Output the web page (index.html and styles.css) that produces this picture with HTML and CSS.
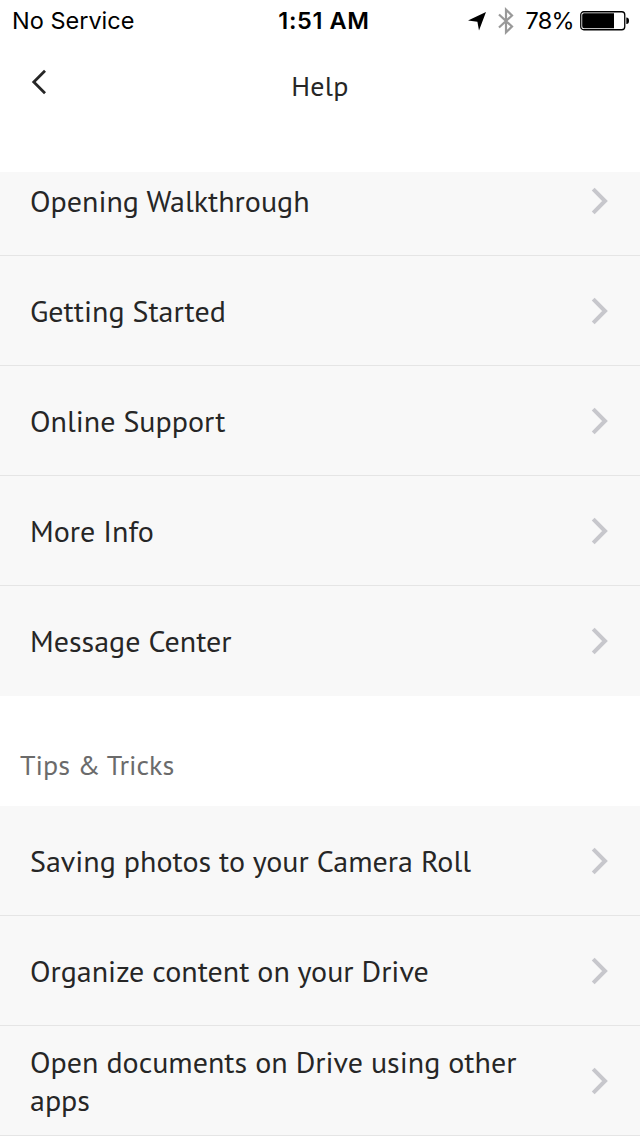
FILE: index.html
```html
<!DOCTYPE html>
<html lang="en">
<head>
<meta charset="utf-8">
<title>Help</title>
<link rel="stylesheet" href="styles.css">
</head>
<body>
<svg class="sprite" aria-hidden="true"><symbol id="chevron" viewBox="0 0 18 28"><path d="M2.2 2.2 14 14 2.2 25.8" fill="none" stroke="#c7c7cc" stroke-width="4"/></symbol></svg>
<div class="screen">
  <header class="header">
    <div class="status">
      <span class="carrier">No Service</span>
      <span class="clock">1:51 AM</span>
      <div class="indicators">
        <svg class="location" width="20" height="20" viewBox="0 0 20 20"><path d="M19 1 12 19.5 10.4 10.8 1 9.4Z" fill="#000"/></svg>
        <svg class="bluetooth" width="16" height="28" viewBox="0 0 16 28"><path d="M1 7.5 14 19.5 8 25.3V2.7L14 8.5 1 20.5" fill="none" stroke="#999" stroke-width="2.2"/></svg>
        <span class="percent">78%</span>
        <svg class="battery" width="49" height="20" viewBox="0 0 49 20"><rect x=".75" y=".75" width="44" height="18" rx="3" fill="#fff" stroke="#000" stroke-width="1.3"/><path d="M4 2.2H34V17.3H4Q2.2 17.3 2.2 15V4Q2.2 2.2 4 2.2Z"/><path d="M46.3 6.5Q49 6.5 49 9.8T46.3 13Z"/></svg>
      </div>
    </div>
    <nav class="nav">
      <svg class="back" width="18" height="28" viewBox="0 0 18 28"><path d="M15 2.8 3.8 14 15 25.2" fill="none" stroke="#262626" stroke-width="2.8"/></svg>
      <h1 class="title">Help</h1>
    </nav>
  </header>
  <main class="content">
    <ul class="list scrolled">
      <li class="row"><span class="label">Opening Walkthrough</span><svg class="chevron"><use href="#chevron"/></svg></li>
      <li class="row"><span class="label">Getting Started</span><svg class="chevron"><use href="#chevron"/></svg></li>
      <li class="row"><span class="label">Online Support</span><svg class="chevron"><use href="#chevron"/></svg></li>
      <li class="row"><span class="label">More Info</span><svg class="chevron"><use href="#chevron"/></svg></li>
      <li class="row plain"><span class="label">Message Center</span><svg class="chevron"><use href="#chevron"/></svg></li>
    </ul>
    <h2 class="section">Tips &amp; Tricks</h2>
    <ul class="list">
      <li class="row"><span class="label">Saving photos to your Camera Roll</span><svg class="chevron"><use href="#chevron"/></svg></li>
      <li class="row"><span class="label">Organize content on your Drive</span><svg class="chevron"><use href="#chevron"/></svg></li>
      <li class="row"><span class="label">Open documents on Drive using other<br>apps</span><svg class="chevron"><use href="#chevron"/></svg></li>
    </ul>
  </main>
</div>
</body>
</html>
```
FILE: styles.css
```css
* { box-sizing: border-box; }
body { margin: 0; background: #fff; font-family: "PT Sans", "Noto Sans", sans-serif; color: #262626; }
.sprite { display: none; }
.screen { width: 640px; height: 1136px; overflow: hidden; display: flex; flex-direction: column; }
.header { height: 172px; flex: none; background: #fff; }
.status { height: 41px; padding: 0 11px 0 12px; display: grid; grid-template-columns: 1fr auto 1fr; grid-template-rows: 41px; align-items: center; color: #000; font-family: Inter, sans-serif; font-size: 23.5px; line-height: 41px; }
.clock { font-weight: 600; letter-spacing: 0.65px; padding-left: 7px; }
.indicators { height: 41px; display: flex; align-items: center; justify-content: flex-end; }
.location { margin-right: 11px; }
.bluetooth { margin-right: 12px; }
.percent { margin-right: 6px; line-height: 41px; letter-spacing: -0.7px; }
.nav { height: 90px; display: grid; grid-template-columns: 80px 1fr 80px; align-items: center; }
.back { margin: 0 0 9px 30px; }
.title { margin: 0 0 2px; font-size: 28px; font-weight: 400; text-align: center; letter-spacing: 0.3px; }
.content { flex: 1; min-height: 0; overflow: hidden; }
.list { list-style: none; margin: 0; padding: 0; }
.scrolled { margin-top: -26px; }
.row { height: 110px; padding: 0 31px 0 30px; display: flex; align-items: center; justify-content: space-between; background: #f8f8f8; border-bottom: 1px solid #e5e5e5; }
.plain { border-bottom-color: #f8f8f8; }
.label { font-size: 30px; line-height: 38px; white-space: nowrap; }
.chevron { width: 18px; height: 28px; flex: none; }
.section { margin: 0; height: 110px; padding: 50px 20px 0; font-size: 28px; line-height: 38px; font-weight: 400; color: #6b6b6b; }
```
